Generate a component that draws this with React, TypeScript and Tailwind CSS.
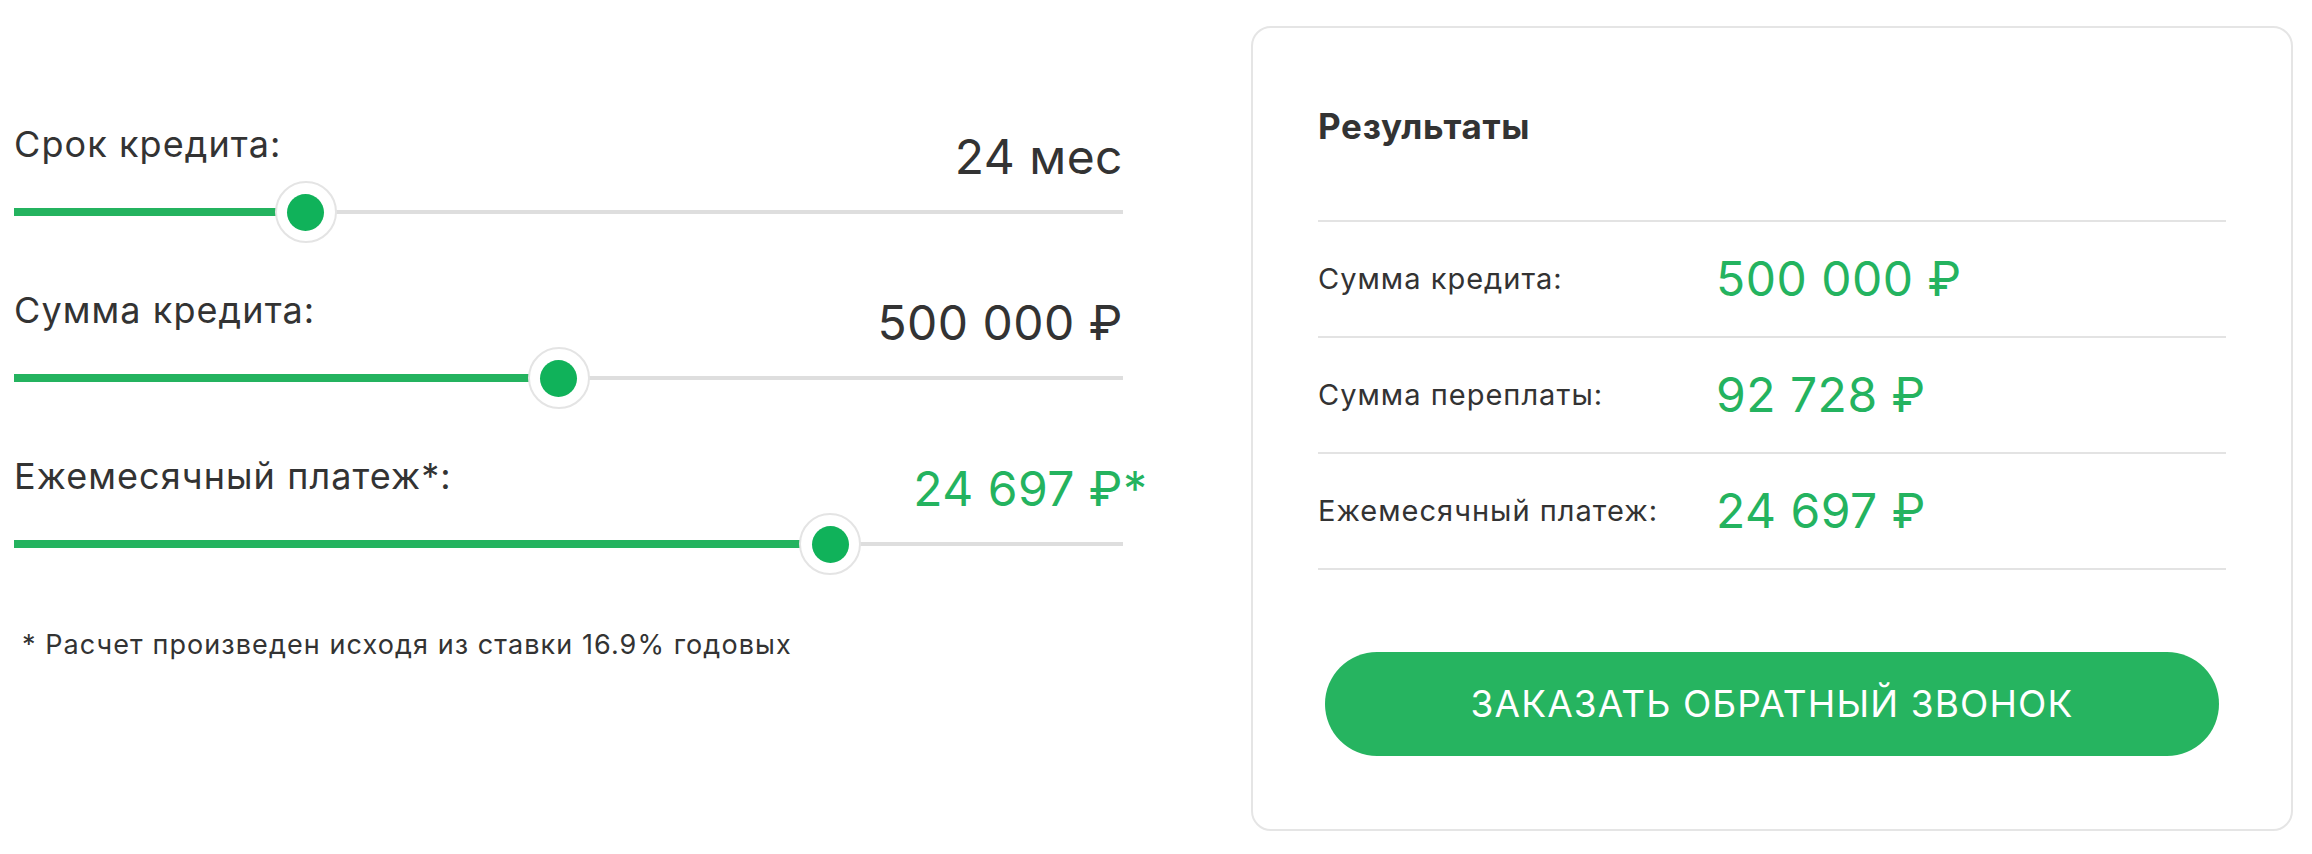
import React from "react";

function Slider({ pct }: { pct: number }) {
  return (
    <div className="relative h-[62px] flex items-center">
      <div className="h-[4px] w-full bg-[#dedede]" />
      <div
        className="absolute left-0 top-1/2 -translate-y-1/2 h-[8px] bg-[#24b35f]"
        style={{ width: `${pct}%` }}
      />
      <div
        className="absolute top-0 -translate-x-1/2 w-[62px] h-[62px] rounded-full bg-white border-2 border-[#e4e4e4] flex items-center justify-center"
        style={{ left: `${pct}%` }}
      >
        <div className="w-[37px] h-[37px] rounded-full bg-[#10b25a]" />
      </div>
    </div>
  );
}

function Row({
  label,
  value,
  pct,
  green,
  star,
}: {
  label: string;
  value: string;
  pct: number;
  green?: boolean;
  star?: boolean;
}) {
  return (
    <div className="mb-[56px] last:mb-0">
      <div className="flex justify-between items-end h-[48px]">
        <div className="text-[36px] tracking-[0.03em] leading-none mb-[19px] text-[#333]">{label}</div>
        <div
          className={
            green
              ? "relative text-[48px] tracking-[0.01em] leading-none text-[#24b35f]"
              : "relative text-[48px] tracking-[0.01em] leading-none text-[#333]"
          }
        >
          {value}
          {star && <span className="absolute left-full top-0">*</span>}
        </div>
      </div>
      <Slider pct={pct} />
    </div>
  );
}

function ResultRow({ label, value }: { label: string; value: string }) {
  return (
    <div className="flex items-center h-[116px] border-b-2 border-[#e3e3e3]">
      <div className="w-[398px] text-[29px] tracking-[0.035em] text-[#333]">{label}</div>
      <div className="text-[48px] tracking-[0.01em] leading-none text-[#24b35f]">{value}</div>
    </div>
  );
}

export default function App() {
  return (
    <div className="w-[2312px] h-[854px] bg-white flex font-['Inter',sans-serif] text-[#333]">
      <div className="w-[1109px] ml-[14px] pt-[133px] shrink-0">
        <Row label="Срок кредита:" value="24 мес" pct={26.3} />
        <Row label="Сумма кредита:" value="500 000 ₽" pct={49.1} />
        <Row label="Ежемесячный платеж*:" value="24 697 ₽" pct={73.6} green star />
        <div className="mt-[49px] ml-[8px] text-[27px] tracking-[0.04em] leading-none text-[#333]">
          * Расчет произведен исходя из ставки 16.9% годовых
        </div>
      </div>
      <div className="ml-[128px] mt-[26px] w-[1042px] h-[805px] shrink-0 border-2 border-[#e5e5e5] rounded-[20px] px-[65px] pt-[81px]">
        <div className="text-[35px] leading-none font-bold tracking-[0.02em] text-[#333] h-[35px] mb-[76px]">
          Результаты
        </div>
        <div className="border-t-2 border-[#e3e3e3]">
          <ResultRow label="Сумма кредита:" value="500 000 ₽" />
          <ResultRow label="Сумма переплаты:" value="92 728 ₽" />
          <ResultRow label="Ежемесячный платеж:" value="24 697 ₽" />
        </div>
        <button className="mt-[82px] mx-auto flex items-center justify-center w-[894px] h-[104px] rounded-full bg-[#26b460] text-white text-[37px] tracking-[0.03em] uppercase">
          Заказать обратный звонок
        </button>
      </div>
    </div>
  );
}
